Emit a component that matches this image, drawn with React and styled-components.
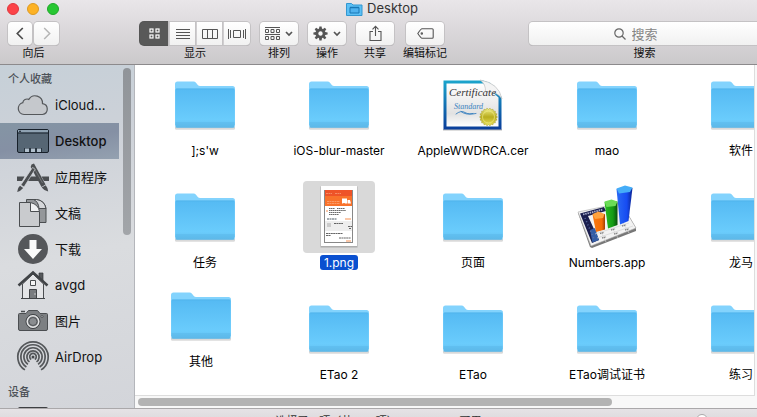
import React from 'react';
import styled, { createGlobalStyle, css } from 'styled-components';

const GlobalStyle = createGlobalStyle`
  * { box-sizing: border-box; }
  body {
    margin: 0;
    overflow: hidden;
    font-family: Inter, "Noto Sans CJK SC", sans-serif;
    font-size: 12px;
    color: #111;
  }
  button, input { font: inherit; color: inherit; }
  svg { display: block; flex: none; }
`;

const Window = styled.div`
  display: flex;
  flex-direction: column;
  height: 100vh;
  overflow: hidden;
  background: #fff;
`;

const Header = styled.header`
  flex: none;
  background: linear-gradient(#e9e6e9, #dad7da 50%, #cbc9cb);
  border-bottom: 1px solid #8c8a8c;
`;

const TitleBar = styled.div`
  display: grid;
  grid-template-columns: 64px 1fr 57px;
  align-items: center;
  height: 17px;
  margin-bottom: 5px;
`;

const Lights = styled.div`
  display: flex;
  gap: 8px;
  padding-left: 7px;
`;

const Light = styled.button`
  width: 12px;
  height: 12px;
  padding: 0;
  border: 1px solid ${(p) => p.$edge};
  border-radius: 50%;
  background: ${(p) => p.$fill};
`;

const Title = styled.h1`
  display: flex;
  align-items: center;
  justify-content: center;
  gap: 4px;
  margin: 0;
  font-size: 13px;
  line-height: 17px;
  font-weight: 400;
  color: #333;
`;

const Toolbar = styled.div`
  display: flex;
  padding: 0 0 2px 7px;
`;

const Tool = styled.div`
  display: flex;
  flex-direction: column;
  align-items: center;
  margin-left: ${(p) => p.$before || 0}px;
`;

const ToolLabel = styled.span`
  font-size: 11px;
  line-height: 17px;
  white-space: nowrap;
`;

const WideTool = styled(Tool)`
  flex: 1;
  align-items: stretch;
  margin-right: -4px;
  text-align: center;
`;

const ControlGroup = styled.div`
  display: flex;
`;

const ToolButton = styled.button`
  display: flex;
  align-items: center;
  justify-content: center;
  gap: 5px;
  width: ${(p) => p.$width}px;
  height: 23px;
  padding: 0;
  border: 0;
  border-radius: 4px;
  color: #555;
  background: linear-gradient(#fff, #f1f1f1);
  box-shadow: 0 0 0 1px #c4c2c4, 0 1px 0 #a9a7a9;
  margin: 0 1px;
  ${(p) => p.$segment && css`
    margin: 0;
    border-radius: 0;
    border-left: 1px solid #d0ced0;
    &:last-child { border-radius: 0 4px 4px 0; }
  `}
  ${(p) => p.$active && css`
    color: #fff;
    background: #595959;
    border: 0;
    border-radius: 4px 0 0 4px;
    box-shadow: 0 0 0 1px #555;
  `}
`;

const TagCell = styled.div`
  display: flex;
  justify-content: center;
  width: 46px;
`;

const SearchField = styled.div`
  display: flex;
  align-items: center;
  justify-content: center;
  gap: 6px;
  height: 23px;
  margin: 0 1px;
  padding-right: 16px;
  border-radius: 4px;
  color: #666;
  background: linear-gradient(#fff, #f1f1f1);
  box-shadow: 0 0 0 1px #c4c2c4, 0 1px 0 #a9a7a9;
`;

const SearchInput = styled.input`
  width: 28px;
  height: 20px;
  padding: 0;
  border: 0;
  outline: 0;
  background: transparent;
  font-size: 13px;
  &::placeholder { color: #858585; opacity: 1; }
`;

const Body = styled.div`
  display: flex;
  flex: 1;
  min-height: 0;
`;

const Sidebar = styled.aside`
  display: flex;
  flex: none;
  width: 135px;
  border-right: 1px solid #b4b6bb;
  background: linear-gradient(170deg, #c6d0d8, #ccd1d8 20%, #dadcdf 55%, #d3d5da);
  overflow: hidden;
`;

const SideNav = styled.nav`
  width: 119px;
  flex: none;
`;

const SideHeading = styled.h2`
  margin: 0;
  padding: ${(p) => p.$top}px 0 0 8px;
  font-size: 11px;
  line-height: 16px;
  font-weight: 500;
  color: #4c5157;
`;

const SideLink = styled.a`
  display: flex;
  align-items: center;
  gap: 5px;
  height: 36px;
  padding-left: 16px;
  font-size: 13px;
  line-height: 16px;
  font-weight: ${(p) => (p.$active ? 500 : 400)};
  color: #111;
  text-decoration: none;
  white-space: nowrap;
  background: ${(p) => (p.$active ? 'linear-gradient(170deg, #8495a4, #8590a4 50%, #94a1b0)' : 'none')};
`;

const SideThumb = styled.div`
  width: 8px;
  height: 167px;
  margin: 3px 0 0 4px;
  border-radius: 4px;
  background: linear-gradient(#909499, #a2a5a9);
`;

const Content = styled.main`
  display: flex;
  flex-direction: column;
  flex: 1;
  min-width: 0;
  background: #f8f8f8;
`;

const IconView = styled.div`
  display: grid;
  grid-template-columns: repeat(5, 134px);
  grid-auto-rows: 112px;
  align-content: start;
  flex: 1;
  min-height: 0;
  margin-right: 2px;
  padding: 4px 0 0 3px;
  border-right: 1px solid #ddd;
  border-bottom: 1px solid #ddd;
  background: #fff;
  overflow: hidden;
`;

const File = styled.figure`
  position: relative;
  left: ${(p) => p.$dx || 0}px;
  top: ${(p) => p.$dy || 0}px;
  display: flex;
  flex-direction: column;
  align-items: center;
  gap: 2px;
  margin: 0;
`;

const FileIcon = styled.div`
  width: 72px;
  height: 72px;
  border-radius: 4px;
  background: ${(p) => (p.$selected ? '#d9d9d9' : 'transparent')};
`;

const FileName = styled.figcaption`
  padding: 0 4px;
  border-radius: 3px;
  line-height: 15px;
  white-space: nowrap;
  color: ${(p) => (p.$selected ? '#fff' : '#000')};
  background: ${(p) => (p.$selected ? '#0a50d0' : 'transparent')};
`;

const ScrollTrack = styled.div`
  flex: none;
  height: 12px;
  padding: 2px 3px;
`;

const ScrollThumb = styled.div`
  width: 77%;
  height: 8px;
  border-radius: 4px;
  background: #b3b3b3;
`;

const StatusBar = styled.footer`
  display: grid;
  grid-template-columns: 1fr auto 1fr;
  flex: none;
  height: 23px;
  margin-bottom: -14px;
  padding-top: 4px;
  border-top: 1px solid #aaa8aa;
  background: linear-gradient(#e6e3e6, #d4d2d4);
`;

const StatusText = styled.span`
  grid-column: 2;
  font-size: 11px;
  line-height: 16px;
  color: #333;
`;

const ZoomLevel = styled.input`
  appearance: none;
  justify-self: end;
  width: 70px;
  height: 2px;
  margin: 6px 8px 0 0;
  background: #aaa;
  &::-webkit-slider-thumb {
    appearance: none;
    width: 12px;
    height: 12px;
    border: 1px solid #aaa;
    border-radius: 50%;
    background: #fff;
  }
`;

const Svg = ({ w, h, children, ...rest }) => (
  <svg width={w} height={h} viewBox={`0 0 ${w} ${h}`} fill="none" aria-hidden="true" {...rest}>{children}</svg>
);

const Chevron = () => (
  <Svg w={8} h={6} stroke="currentColor" strokeWidth="1.7"><path d="M1 1l3 3 3-3" /></Svg>
);

const gear = Array.from({ length: 8 }, (_, i) => i * 45);

const glyphs = {
  back: <Svg w={8} h={13} stroke="#4c4c4c" strokeWidth="1.7"><path d="M6.8 1L1.3 6.5l5.5 5.5" /></Svg>,
  forward: <Svg w={8} h={13} stroke="#b5b5b5" strokeWidth="1.5"><path d="M1.2 1l5.5 5.5L1.2 12" /></Svg>,
  icons: (
    <Svg w={11} h={11} stroke="currentColor" strokeWidth="1.2">
      <rect x="1" y="1" width="3" height="3" /><rect x="7" y="1" width="3" height="3" />
      <rect x="1" y="7" width="3" height="3" /><rect x="7" y="7" width="3" height="3" />
    </Svg>
  ),
  list: <Svg w={14} h={11} stroke="currentColor"><path d="M0 1.5h14M0 4.5h14M0 7.5h14M0 10.5h14" /></Svg>,
  columns: <Svg w={16} h={11} stroke="currentColor"><path d="M.5 1.5h15v9H.5zM5.5 1.5v9M10.5 1.5v9" /></Svg>,
  flow: <Svg w={18} h={11} stroke="currentColor"><path d="M.5 1v10M2.5 2v8M5.5 2.5h7v7h-7zM15.5 2v8M17.5 1v10" /></Svg>,
  arrange: (
    <Svg w={15} h={13} stroke="currentColor">
      <path d="M0 .5h15M0 7.5h15M.5 2.5h3v3h-3zM6 2.5h3v3H6zM11.5 2.5h3v3h-3zM.5 9.5h3v3h-3zM6 9.5h3v3H6zM11.5 9.5h3v3h-3z" />
    </Svg>
  ),
  gear: (
    <Svg w={15} h={15}>
      <g fill="currentColor">{gear.map((a) => <path key={a} d="M6 3l.4-2.6h2.2L9 3z" transform={`rotate(${a} 7.5 7.5)`} />)}</g>
      <circle cx="7.5" cy="7.5" r="3.6" stroke="currentColor" strokeWidth="2.8" />
    </Svg>
  ),
  share: <Svg w={13} h={17} stroke="currentColor" strokeWidth="1.1"><path d="M4 6.5H1v9h11v-9H9M6.5 11V1.5M3.5 4.3l3-3 3 3" /></Svg>,
  tag: <Svg w={17} h={11} stroke="currentColor" strokeWidth="1.1"><path d="M5 .8h10.2q1 0 1 1v7.4q0 1-1 1H5Q4 10.2 .8 5.5 4 .8 5 .8z" /><circle cx="4.8" cy="5.5" r=".7" /></Svg>,
  search: <Svg w={12} h={12} stroke="currentColor" strokeWidth="1.2"><circle cx="5" cy="5" r="4.2" /><path d="M8 8l3.5 3.5" /></Svg>,
};

const SideIcon = ({ children }) => <Svg w={34} h={36}>{children}</Svg>;

const sideIcons = {
  cloud: (
    <SideIcon>
      <path d="M8 27.5a6 6 0 0 1-1.2-11.8 4.3 4.3 0 0 1 6-3.3 7.4 7.4 0 0 1 13.7 4.2A5.5 5.5 0 0 1 26.5 27.5z" fill="#c5c8cc" stroke="#55585b" strokeWidth="1.2" />
    </SideIcon>
  ),
  desktop: (
    <SideIcon>
      <rect x="1.5" y="6.5" width="31" height="23" rx="1.5" fill="#566674" stroke="#17202a" />
      <path d="M2 7h30v2.5H2z" fill="#8fa2b2" /><path d="M2 10h30" stroke="#17202a" />
      <path d="M3 8.3h2" stroke="#17202a" />
      <path d="M8 25h18v4H8z" fill="#2a3641" />
      <path d="M9 25.5h4v3.5H9zM15 25.5h4v3.5h-4zM21 25.5h4v3.5h-4z" fill="#b1c0cd" />
    </SideIcon>
  ),
  apps: (
    <SideIcon>
      <path d="M1 17.5h7.5L6 22H1zM12.5 17.5H21l2.5 4.5H10zM25.5 17.5H33V22h-5z" fill="#4b4e51" />
      <path d="M15.5 5.5l2.5-1 11.5 21-4 2.5L14.7 8z" fill="#4b4e51" />
      <path d="M25.7 28.5l4-2.2q2.3 2.7 2.5 6.2-4-.7-6.5-4z" fill="#4b4e51" />
      <path d="M16.5 8.5l2.7 1.7L8 28l-3.2-2z" fill="#4b4e51" stroke="#d6d9dc" strokeWidth=".7" />
      <path d="M4 26.8L7.2 29q-3 3.5-6 4 0-4 2.8-6.2z" fill="#4b4e51" />
      <path d="M17.5 8l9 16" stroke="#8b8e91" strokeWidth=".6" />
    </SideIcon>
  ),
  docs: (
    <SideIcon>
      <path d="M10.5 4.5h10q8 1 9.500 9v14H10.5z" fill="#94979a" stroke="#4b4e51" />
      <path d="M17.5 4.5q5 2 5.5 9h7q-1.500-8-9.500-9z" fill="#d5d7da" stroke="#4b4e51" />
      <path d="M3.5 7.5H14l9.500 9.500v14.500h-20z" fill="#c9cbce" stroke="#4b4e51" />
      <path d="M14.5 7.5v9h9q-1-7-9-9z" fill="#f0f1f2" stroke="#4b4e51" />
    </SideIcon>
  ),
  download: (
    <SideIcon>
      <circle cx="17" cy="18" r="15" fill="#55575a" />
      <path d="M13.5 9h7v9h5.5l-9 10-9-10h5.5z" fill="#fafafa" />
    </SideIcon>
  ),
  home: (
    <SideIcon>
      <path d="M23 6h4v8l-4-4z" fill="#55585b" stroke="#33363a" strokeWidth=".7" />
      <path d="M6.5 17L17 7l10.5 10v14.5h-21z" fill="#e4e5e7" stroke="#4b4e51" />
      <path d="M2.5 18.5l14.5-13 14.5 13" stroke="#414447" strokeWidth="2.6" />
      <path d="M14.5 13.5h5v5h-5z" fill="#f5f5f5" stroke="#4b4e51" />
      <path d="M13.5 22.5h7v9h-7z" fill="#797c7f" stroke="#414447" />
      <path d="M5 31.5h24" stroke="#414447" />
      <circle cx="19" cy="27" r=".7" fill="#ddd" />
    </SideIcon>
  ),
  camera: (
    <SideIcon>
      <path d="M5 8.5h4" stroke="#4b4e51" strokeWidth="1.5" />
      <path d="M3.5 10.5H10l2.5-3h9l2.5 3h6.5q1 0 1 1V26q0 1.5-1.5 1.5H4q-1.5 0-1.5-1.5V11.5q0-1 1-1z" fill="#7c7f82" stroke="#4b4e51" />
      <circle cx="17" cy="18.5" r="7" fill="#6b6e71" stroke="#3f4245" />
      <circle cx="17" cy="18.5" r="5.8" stroke="#e4e5e6" strokeWidth="1.4" fill="#7c7f82" />
      <circle cx="17" cy="18.5" r="4" stroke="#55585b" fill="#8a8d90" />
      <circle cx="26" cy="13.5" r="1" fill="#ddd" stroke="#4b4e51" />
    </SideIcon>
  ),
  airdrop: (
    <SideIcon>
      <g stroke="#55585b" strokeWidth="1.7">
        <path d="M8.9 30.9A15.2 15.2 0 1 1 25.1 30.9" />
        <path d="M10.4 28A12.1 12.1 0 1 1 23.6 28" />
        <path d="M11.9 25.4A9.1 9.1 0 1 1 22.1 25.4" />
        <path d="M13.5 22.9A6.1 6.1 0 1 1 20.5 22.9" />
        <path d="M15.2 20.5A3.3 3.3 0 1 1 18.8 20.5" />
      </g>
      <circle cx="17" cy="18" r="1.5" fill="#45484b" />
    </SideIcon>
  ),
  disk: <SideIcon><rect x="2" y="7" width="30" height="20" rx="2" fill="#3e4043" /></SideIcon>,
};

const Folder = () => (
  <Svg w={72} h={72}>
    <defs>
      <linearGradient id="folderFront" x1="0" y1="0" x2="0" y2="1">
        <stop offset="0" stopColor="#55baf3" /><stop offset=".8" stopColor="#6accfc" /><stop offset="1" stopColor="#62bdec" />
      </linearGradient>
    </defs>
    <path d="M6 58h60v1.5q0 1.2-1.5 1.2h-57Q6 60.7 6 59.5z" fill="#c9c9c9" opacity=".7" />
    <path d="M6 15q0-2.5 2.5-2.5h16q1.5 0 2.5 1.3l2 2.4q.8.8 2 .8h32.5Q66 17 66 19.5V56H6z" fill="#83d3fd" />
    <path d="M6.3 21q0-1.5 1.5-1.5h56.4q1.5 0 1.5 1.5v36q0 1.7-1.7 1.7H8q-1.7 0-1.7-1.7z" fill="url(#folderFront)" />
    <path d="M7 20h58" stroke="#4eafe6" strokeWidth=".8" opacity=".6" />
    <path d="M6.5 54h59M6.5 56h59M6.5 58h59" stroke="#4ba6da" strokeWidth=".7" opacity=".6" />
  </Svg>
);

const sealPoints = Array.from({ length: 36 }, (_, i) => {
  const r = i % 2 ? 7.6 : 9;
  const a = (i * Math.PI) / 18;
  return `${51.5 + r * Math.cos(a)},${48 + r * Math.sin(a)}`;
}).join(' ');

const Certificate = () => (
  <Svg w={72} h={72}>
    <defs>
      <linearGradient id="certEdge" x1="0" y1="0" x2="0" y2="1"><stop offset="0" stopColor="#1ba5cc" /><stop offset="1" stopColor="#0a3d9a" /></linearGradient>
      <linearGradient id="certSeal" x1="0" y1="0" x2="0" y2="1"><stop offset="0" stopColor="#f2ef8a" /><stop offset=".5" stopColor="#b8ad1e" /><stop offset="1" stopColor="#ece45e" /></linearGradient>
      <linearGradient id="certPaper" x1="0" y1="0" x2="0" y2="1"><stop offset="0" stopColor="#fff" /><stop offset=".7" stopColor="#e2e2e2" /><stop offset="1" stopColor="#fff" /></linearGradient>
    </defs>
    <path d="M6 60h59v1.5H6z" fill="#bbb" />
    <path d="M6.5 11.5H46Q59 14 64.5 28v32.5h-58z" fill="url(#certEdge)" />
    <path d="M9.5 14.5H46l15.5 14v29h-52z" fill="url(#certPaper)" />
    <path d="M43 11q6 4 5.5 12 12-1 16.5 7Q62 14 43 11z" fill="#f4f4f4" stroke="#bbb" strokeWidth=".6" />
    <text x="12" y="27" fontFamily="Liberation Serif, serif" fontStyle="italic" fontSize="11" fill="#333">Certificate</text>
    <text x="17" y="40" fontFamily="Liberation Serif, serif" fontStyle="italic" fontSize="8" fill="#3b83c0">Standard</text>
    <path d="M19 45q5-4 9-1.5t11 1M24 42.5q5 4 12 2" strokeWidth=".8" stroke="#2475bb" strokeLinecap="round" />
    <polygon points={sealPoints} fill="url(#certSeal)" stroke="#a39a20" strokeWidth=".5" />
    <circle cx="51.5" cy="48" r="6" stroke="#f2ee91" strokeWidth=".6" />
  </Svg>
);

const Picture = () => (
  <Svg w={72} h={72}>
    <rect x="17.5" y="5.5" width="37" height="61" fill="#8f8f8f" opacity=".6" />
    <rect x="18" y="5" width="36" height="60" fill="#fff" />
    <rect x="21" y="9" width="29" height="53" fill="#888" />
    <rect x="22" y="9" width="27" height="52" fill="#fff" />
    <rect x="22" y="9" width="27" height="6" fill="#ee5328" />
    <rect x="22" y="15" width="27" height="10" fill="#f9722b" />
    <path d="M23 12.5h6M32 12.5h6M24 20.5h13M24 22.5h13" stroke="#ffc4a4" strokeWidth=".7" strokeDasharray="2 .5" opacity=".7" />
    <path d="M39 17.5h5v5h-5zM44.5 19h2.5l1 3.500h-3.500z" fill="#fff" />
    <circle cx="41" cy="23" r="1" fill="#f9722b" />
    <path d="M26 27.5h6M34 27.5h8M26 29.5h17M26 31.5h12M26 33.5h10" stroke="#444" strokeWidth=".8" strokeDasharray="1.5 .4" />
    <path d="M23 30h2M42 38h6M31 47.5h4M43 60h5" stroke="#f79155" strokeWidth="1.2" />
    <path d="M24 38h10" stroke="#4d5a64" strokeDasharray="2 .5" />
    <rect x="22" y="40" width="27" height="10" fill="#eee" />
    <rect x="24" y="42" width="4" height="4" fill="#ccc" />
    <path d="M31 42.5h9M45 45.5h4M46 47.5h2M23 52.5h17M23 54.5h5M36 57h12" stroke="#555" strokeWidth=".9" strokeDasharray="2 .4" />
  </Svg>
);

const NumbersApp = () => (
  <Svg w={72} h={72}>
    <defs>
      <linearGradient id="barBlue" x1="0" y1="0" x2="1" y2="0"><stop offset="0" stopColor="#2b6bf5" /><stop offset=".65" stopColor="#164bf2" /><stop offset="1" stopColor="#0b2390" /></linearGradient>
      <linearGradient id="barGreen" x1="0" y1="0" x2="1" y2="0"><stop offset="0" stopColor="#28ba20" /><stop offset=".65" stopColor="#159b15" /><stop offset="1" stopColor="#08500b" /></linearGradient>
      <linearGradient id="barOrange" x1="0" y1="0" x2="1" y2="0"><stop offset="0" stopColor="#fa7a12" /><stop offset=".75" stopColor="#f46c05" /><stop offset="1" stopColor="#a13c02" /></linearGradient>
    </defs>
    <path d="M7 32L51 23l14 24v3L21 67l-2-1z" fill="#777" />
    <path d="M7 31L50 22l15 25-45 18z" fill="#f3f3f3" stroke="#aaa" strokeWidth=".6" />
    <path d="M9 32.5l24-6.500 2 4-18 5 11 24-7 3z" fill="#1b1f4f" />
    <path d="M19 49l5-2 4 12-6.500 2.500z" fill="#345da6" />
    <path d="M24 53l34-11M26 57l36-12M29 49l6 12M40 45l7 12M51 40l7 12" stroke="#d4d4d4" strokeWidth=".7" />
    <path d="M29 52.5l4-1M40 49l4-1M51 45l4-1M31 57l4-1M43 53l4-1M54 49l4-1" stroke="#888" strokeWidth="1.3" strokeDasharray="1.3 .5" />
    <path d="M12 33.5l20-5" stroke="#a9aecb" strokeWidth="1.8" strokeDasharray="1.5 .8" />
    <path d="M14 37l9 21" stroke="#5c6da5" strokeWidth="1.5" strokeDasharray="1 2.5" />
    <path d="M21.5 33.5l12.5-.5v15.5l-9 2.500z" fill="url(#barOrange)" />
    <path d="M21.5 33l6-2.500 6 2.500-1.500 4-8 1z" fill="#ffa23d" />
    <path d="M33.5 21l13-.5V44L37 47.500z" fill="url(#barGreen)" />
    <path d="M33.5 20.5l7-2 6 2-2 4.500-9 1z" fill="#6bdc57" />
    <path d="M45.5 8l16-1L57.500 40l-8.500 3.500z" fill="url(#barBlue)" />
    <path d="M45.5 7.5L54 4.500l7.500 2L59 11l-11 1.500z" fill="#45adf8" />
  </Svg>
);

const fileIcons = { folder: Folder, cert: Certificate, picture: Picture, numbers: NumbersApp };

const files = [
  { name: "];s'w" }, { name: 'iOS-blur-master' }, { name: 'AppleWWDRCA.cer', icon: 'cert' }, { name: 'mao' }, { name: '软件' },
  { name: '任务' }, { name: '1.png', icon: 'picture', selected: true }, { name: '页面' }, { name: 'Numbers.app', icon: 'numbers' }, { name: '龙马' },
  { name: '其他', dx: -4, dy: -13 }, { name: 'ETao 2' }, { name: 'ETao' }, { name: 'ETao调试证书' }, { name: '练习' },
];

const places = [
  ['cloud', 'iCloud...'], ['desktop', 'Desktop'], ['apps', '应用程序'], ['docs', '文稿'],
  ['download', '下载'], ['home', 'avgd'], ['camera', '图片'], ['airdrop', 'AirDrop'],
];

export default function App() {
  return (
    <Window>
      <GlobalStyle />
      <Header>
        <TitleBar>
          <Lights>
            <Light aria-label="关闭" $fill="#fc4348" $edge="#e0383e" />
            <Light aria-label="最小化" $fill="#fdb225" $edge="#dd9a22" />
            <Light aria-label="缩放" $fill="#28c732" $edge="#20a82a" />
          </Lights>
          <Title>
            <Svg w={17} h={14}>
              <path d="M.5 1.5h5l1.5 1.5h9v10.5H.5z" fill="#5cc0f5" stroke="#3397d0" />
              <path d="M4 5.5h9v5.5H4z" fill="#4fb2ee" stroke="#1877b5" /><path d="M4 5.5h9" stroke="#1877b5" strokeWidth="1.5" />
            </Svg>
            Desktop
          </Title>
        </TitleBar>
        <Toolbar>
          <Tool>
            <ControlGroup>
              <ToolButton $width={24} aria-label="向后">{glyphs.back}</ToolButton>
              <ToolButton $width={25} aria-label="向前">{glyphs.forward}</ToolButton>
            </ControlGroup>
            <ToolLabel>向后</ToolLabel>
          </Tool>
          <Tool $before={80}>
            <ControlGroup>
              <ToolButton $width={29} $segment $active aria-label="图标">{glyphs.icons}</ToolButton>
              <ToolButton $width={27} $segment aria-label="列表">{glyphs.list}</ToolButton>
              <ToolButton $width={27} $segment aria-label="分栏">{glyphs.columns}</ToolButton>
              <ToolButton $width={27} $segment aria-label="封面流">{glyphs.flow}</ToolButton>
            </ControlGroup>
            <ToolLabel>显示</ToolLabel>
          </Tool>
          <Tool $before={9}>
            <ToolButton $width={38} aria-label="排列">{glyphs.arrange}<Chevron /></ToolButton>
            <ToolLabel>排列</ToolLabel>
          </Tool>
          <Tool $before={8}>
            <ToolButton $width={38} aria-label="操作">{glyphs.gear}<Chevron /></ToolButton>
            <ToolLabel>操作</ToolLabel>
          </Tool>
          <Tool $before={8}>
            <ToolButton $width={38} aria-label="共享">{glyphs.share}</ToolButton>
            <ToolLabel>共享</ToolLabel>
          </Tool>
          <Tool $before={7}>
            <TagCell><ToolButton $width={38} aria-label="编辑标记">{glyphs.tag}</ToolButton></TagCell>
            <ToolLabel>编辑标记</ToolLabel>
          </Tool>
          <WideTool $before={80}>
            <SearchField>
              {glyphs.search}
              <SearchInput id="search" placeholder="搜索" />
            </SearchField>
            <ToolLabel as="label" htmlFor="search">搜索</ToolLabel>
          </WideTool>
        </Toolbar>
      </Header>
      <Body>
        <Sidebar>
          <SideNav>
            <SideHeading $top={6}>个人收藏</SideHeading>
            {places.map(([icon, label]) => (
              <SideLink key={icon} href="#" $active={icon === 'desktop'}>{sideIcons[icon]}{label}</SideLink>
            ))}
            <SideHeading $top={9}>设备</SideHeading>
            <SideLink href="#" aria-label="磁盘">{sideIcons.disk}</SideLink>
          </SideNav>
          <SideThumb />
        </Sidebar>
        <Content>
          <IconView>
            {files.map(({ name, icon = 'folder', selected, dx, dy }) => {
              const Icon = fileIcons[icon];
              return (
                <File key={name} $dx={dx} $dy={dy}>
                  <FileIcon $selected={selected}><Icon /></FileIcon>
                  <FileName $selected={selected}>{name}</FileName>
                </File>
              );
            })}
          </IconView>
          <ScrollTrack><ScrollThumb /></ScrollTrack>
        </Content>
      </Body>
      <StatusBar>
        <StatusText>选择了 1 项（共 107 项），103.28 GB 可用</StatusText>
        <ZoomLevel type="range" aria-label="图标大小" defaultValue="30" />
      </StatusBar>
    </Window>
  );
}
